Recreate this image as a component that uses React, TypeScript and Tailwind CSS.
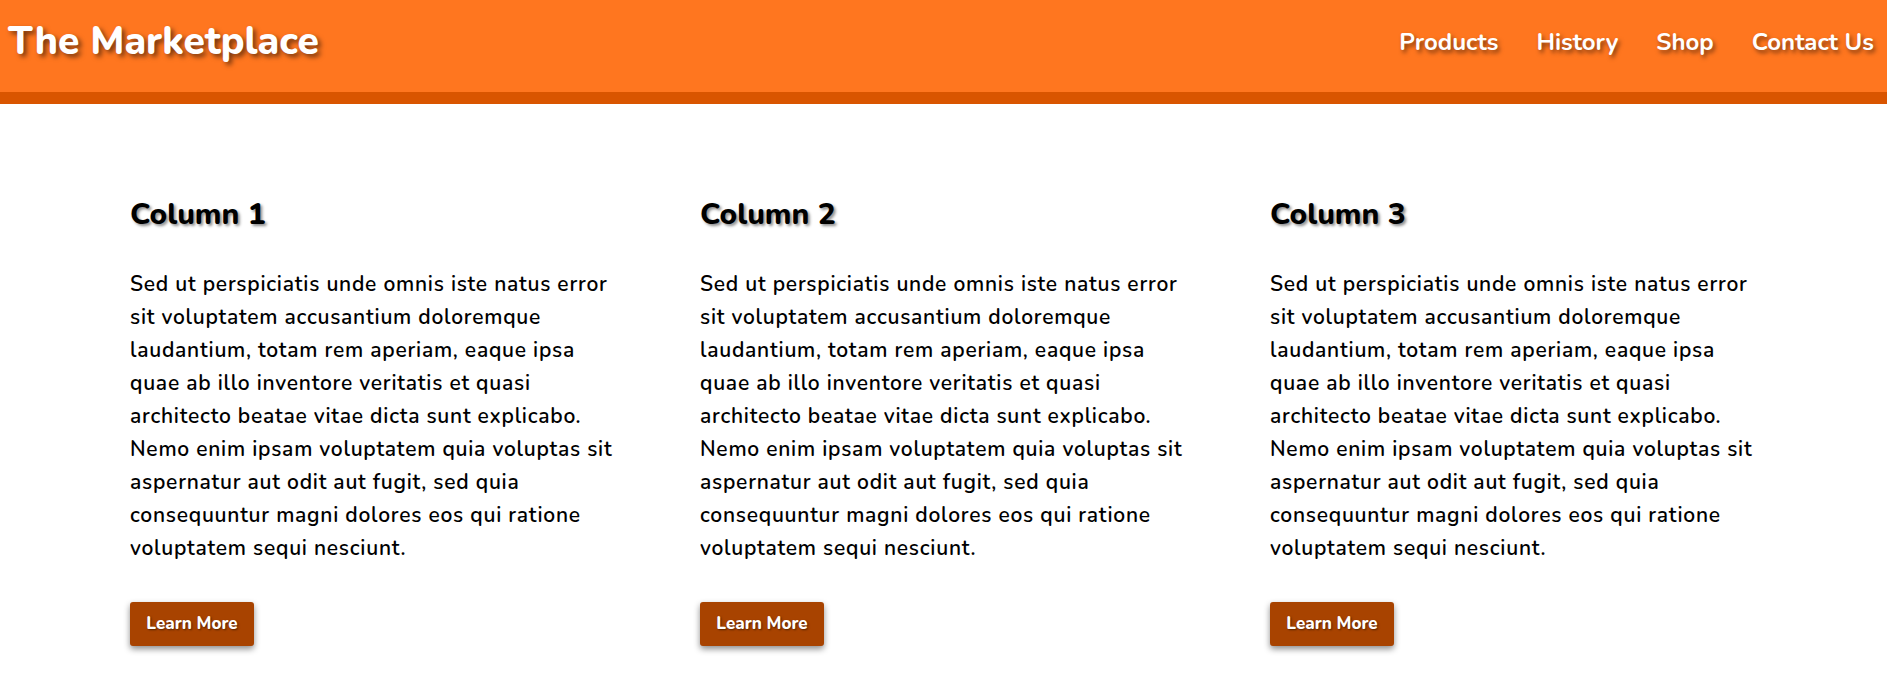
const lines = [
  "Sed ut perspiciatis unde omnis iste natus error",
  "sit voluptatem accusantium doloremque",
  "laudantium, totam rem aperiam, eaque ipsa",
  "quae ab illo inventore veritatis et quasi",
  "architecto beatae vitae dicta sunt explicabo.",
  "Nemo enim ipsam voluptatem quia voluptas sit",
  "aspernatur aut odit aut fugit, sed quia",
  "consequuntur magni dolores eos qui ratione",
  "voluptatem sequi nesciunt.",
];

const navLinks = ["Products", "History", "Shop", "Contact Us"];

export default function App() {
  return (
    <div className="min-h-screen bg-white font-['Nunito','Lato','Noto_Sans',sans-serif]">
      <header className="flex h-[104px] items-center justify-between border-b-[12px] border-[#d95500] bg-[#ff761f] pb-[8px] pl-2 pr-[13px]">
        <h1 className="text-[39px] font-extrabold text-white [text-shadow:3px_3px_5px_rgba(0,0,0,0.55)]">
          The Marketplace
        </h1>
        <nav className="flex gap-[38px]">
          {navLinks.map((l) => (
            <a
              key={l}
              href="#"
              className="text-[24px] font-bold text-white [text-shadow:2px_3px_4px_rgba(0,0,0,0.5)]"
            >
              {l}
            </a>
          ))}
        </nav>
      </header>

      <main className="grid grid-cols-3 pl-[130px] pr-[47px] pt-[93px]">
        {[1, 2, 3].map((n) => (
          <section key={n}>
            <h2 className="text-[30px] font-extrabold leading-[36px] text-black [text-shadow:2px_2px_3px_rgba(0,0,0,0.45)]">
              Column {n}
            </h2>
            <p className="mt-[35px] text-[21px] font-semibold leading-[33px] tracking-[0.75px] text-black">
              {lines.map((t, i) => (
                <span key={i} className="block">
                  {t}
                </span>
              ))}
            </p>
            <button className="mt-[37px] h-[44px] w-[124px] rounded-[3px] bg-[#a84300] text-[17px] font-extrabold text-white shadow-[0_3px_6px_rgba(0,0,0,0.45)] [text-shadow:1px_1px_2px_rgba(0,0,0,0.5)]">
              Learn More
            </button>
          </section>
        ))}
      </main>
    </div>
  );
}
